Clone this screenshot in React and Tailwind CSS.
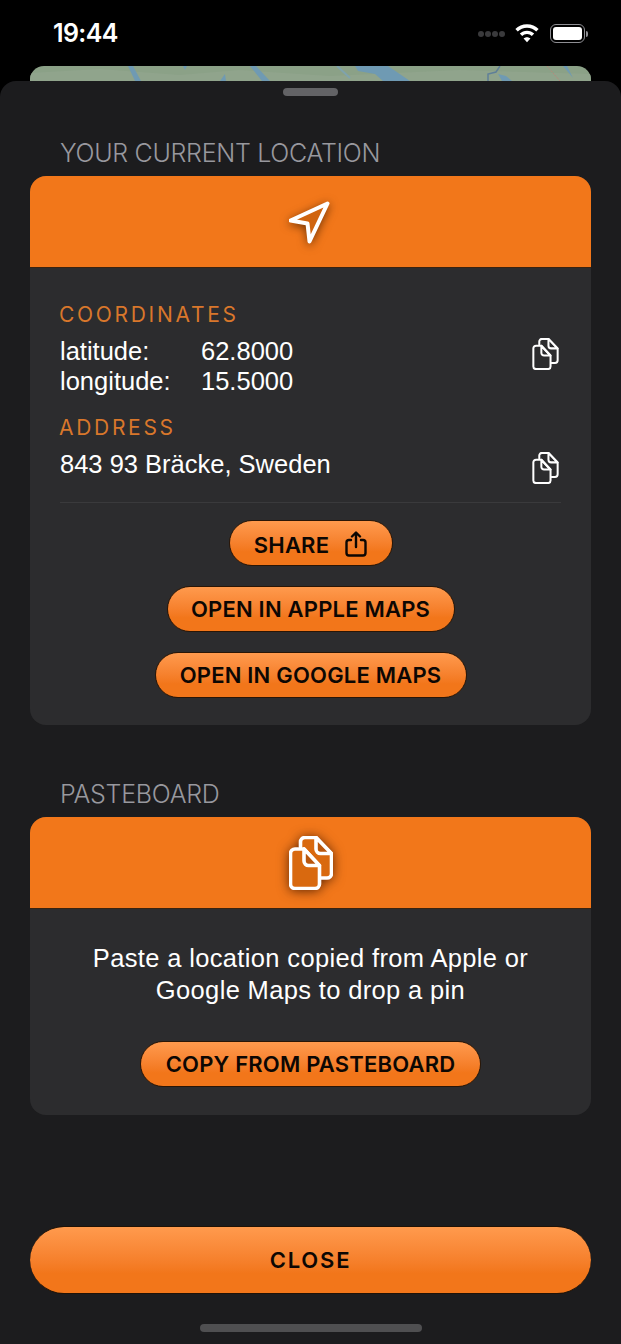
import React from 'react';

const font = { fontFamily: 'Inter, "Noto Sans", sans-serif' };
const bodyFont = 'font-["Liberation_Sans",Arial,sans-serif] text-[25.5px] text-white';

const CopyIcon = ({ className, strokeWidth = 3.4, fill = 'none', foldFill = 'none' }) => (
  <svg className={className} viewBox="0 0 44 54" fill="none" stroke="currentColor" strokeWidth={strokeWidth} strokeLinejoin="round" strokeLinecap="round">
    {/* back page */}
    <path fill={fill} d="M11.500 11V6A4.500 4.500 0 0 1 16 1.500H27L42.500 18V37.500A4.500 4.500 0 0 1 38 42H32" />
    <path fill={foldFill} d="M27 1.500V13A4.500 4.500 0 0 0 31.500 17.500H42.500Z" />
    {/* front page */}
    <path fill={fill} d="M6 13H15L30.500 30V48A4.500 4.500 0 0 1 26 52.500H6A4.500 4.500 0 0 1 1.500 48V17.500A4.500 4.500 0 0 1 6 13Z" />
    <path fill={foldFill} d="M15 13V25A4.500 4.500 0 0 0 19.500 29.500H30.500Z" />
  </svg>
);

const PillButton = ({ children, className = '' }) => (
  <button className={`flex h-[46px] items-center justify-center rounded-full border border-[#2a1606] bg-gradient-to-b from-[#ff9a4d] to-[#f2761a] to-70% text-[22px] font-semibold tracking-[0.2px] text-[#0d0703] ${className}`}>
    {children}
  </button>
);

const Section = ({ title, icon, children }) => (
  <section>
    <h2 className="pl-[30px] text-[25px] font-light leading-[30px] tracking-[-0.3px] text-[#98989e]">{title}</h2>
    <div className="mt-[8px] overflow-hidden rounded-[16px] bg-[#2c2c2e]">
      <div className="flex h-[92px] items-center justify-center border-b border-[#3a2310] bg-[#f2771a] text-white">
        {icon}
      </div>
      {children}
    </div>
  </section>
);

export default function App() {
  return (
    <div className="flex h-[1344px] w-[621px] flex-col overflow-hidden bg-black" style={font}>
      {/* status bar */}
      <div className="flex h-[66px] items-start justify-between pl-[53px] pr-[33px] pt-[18px]">
        <span className="text-[25px] font-semibold leading-[30px] tracking-[-0.6px] text-white">19:44</span>
        <div className="flex items-center pt-[6px]">
          <div className="flex gap-[1px]">
            <span className="h-[6px] w-[6px] rounded-full bg-[#3a3a3c]" />
            <span className="h-[6px] w-[6px] rounded-full bg-[#3a3a3c]" />
            <span className="h-[6px] w-[6px] rounded-full bg-[#3a3a3c]" />
            <span className="h-[6px] w-[6px] rounded-full bg-[#3a3a3c]" />
          </div>
          <svg className="ml-[10px] h-[19px] w-[24px] text-white" viewBox="0 0 26 20" fill="currentColor">
            <path d="M13 0C8 0 3.600 2 0.400 5.200L3 7.800C5.600 5.300 9.100 3.700 13 3.700s7.400 1.600 10 4.100l2.600-2.600C22.400 2 18 0 13 0Z" />
            <path d="M13 7C10 7 7.200 8.200 5.200 10.100l2.600 2.600C9.200 11.400 11 10.600 13 10.600s3.800 0.800 5.200 2.100l2.600-2.600C18.800 8.200 16 7 13 7Z" />
            <path d="M13 14c-1.500 0-2.800 0.600-3.700 1.500L13 19.500l3.700-4C15.800 14.600 14.500 14 13 14Z" />
          </svg>
          <div className="ml-[11px] flex items-center gap-[1px]">
            <div className="h-[19px] w-[35px] rounded-[6px] border border-[#8e8e93] p-[2px]">
              <div className="h-full w-full rounded-[3px] bg-white" />
            </div>
            <div className="h-[6px] w-[2px] rounded-r-full bg-[#8e8e93]" />
          </div>
        </div>
      </div>

      {/* map peeking behind the sheet */}
      <div className="mx-[30px] h-[15px] shrink-0 overflow-hidden rounded-t-[14px] bg-[#8ba187]">
        <svg className="h-full w-full" viewBox="0 0 561 15" preserveAspectRatio="none">
          <path d="M0 7 L70 3 L150 9 L210 4 L300 10 L430 4 L561 8 V15 H0 Z" fill="#90a48c" />
          <path d="M98 0 H103 L111 15 H105 Z" fill="#6f9ab3" />
          <path d="M153 0 H157 L155 4 Z" fill="#6f9ab3" />
          <path d="M190 15 L195 8 L196 15 Z" fill="#6f9ab3" />
          <path d="M220 0 H226 L240 15 H232 Z" fill="#6f9ab3" />
          <path d="M307 0 L320 12" stroke="#7fa3ad" strokeWidth="2" fill="none" />
          <path d="M325 0 H358 L380 15 H353 L345 8 L328 5 Z" fill="#6f9ab3" />
          <path d="M458 15 V8 L466 6 L470 0" stroke="#5f7f98" strokeWidth="1.500" fill="none" />
          <path d="M468 8 L476 10 L482 15 H472 Z" fill="#6f9ab3" />
          <path d="M517 0 L530 15" stroke="#b5897c" strokeWidth="1" strokeDasharray="2 1" fill="none" />
          <path d="M533 0 H537 L543 12 Z" fill="#6f9ab3" />
        </svg>
      </div>

      {/* sheet */}
      <div className="relative flex flex-1 flex-col rounded-t-[16px] bg-[#1c1c1e] px-[30px] pt-[7px]">
        <div className="mx-auto h-[8px] w-[55px] rounded-full bg-[#636366]" />

        <div className="mt-[42px]">
          <Section
            title="YOUR CURRENT LOCATION"
            icon={
              <svg className="h-[44px] w-[44px] drop-shadow-[0_2px_5px_rgba(90,40,0,0.85)]" viewBox="0 0 44 44" fill="#d0640f" stroke="currentColor" strokeWidth="4" strokeLinejoin="round">
                <path d="M38.500 3.500 L1.500 20.500 L18.500 23.500 L20.500 41.500 Z" />
              </svg>
            }
          >
            <div className="px-[30px] pt-[34px]">
              <div className="flex justify-between">
                <div>
                  <p className="-ml-px text-[21px] leading-[26px] tracking-[2.7px] text-[#d9772b]">COORDINATES</p>
                  <div className={`mt-[8px] grid grid-cols-[141px_91px] leading-[30px] ${bodyFont}`}>
                    <span>latitude:</span>
                    <span className="text-right">62.8000</span>
                    <span>longitude:</span>
                    <span className="text-right">15.5000</span>
                  </div>
                </div>
                <CopyIcon className="mr-[2px] mt-[36px] h-[32px] w-[27px] text-white" />
              </div>
              <div className="mt-[19px] flex justify-between">
                <div>
                  <p className="-ml-px text-[21px] leading-[26px] tracking-[2.7px] text-[#d9772b]">ADDRESS</p>
                  <p className={`mt-[8px] leading-[30px] ${bodyFont}`}>843 93 Bräcke, Sweden</p>
                </div>
                <CopyIcon className="-mb-[5px] mr-[2px] mt-[37px] h-[32px] w-[27px] text-white" />
              </div>
              <div className="mt-[23px] border-t border-[#3a3a3c]" />
            </div>
            <div className="flex flex-col items-center gap-[20px] pb-[27px] pt-[17px]">
              <PillButton className="w-[164px] gap-[16px] pt-[4px]">
                SHARE
                <svg className="-mt-[3px] h-[26px] w-[22px]" viewBox="0 0 22 26" fill="none" stroke="currentColor" strokeWidth="2.400" strokeLinecap="round" strokeLinejoin="round">
                  <path d="M6 9H4a2.500 2.500 0 0 0-2.500 2.500v10.500A2.500 2.500 0 0 0 4 24.500h14a2.500 2.500 0 0 0 2.500-2.500V11.500A2.500 2.500 0 0 0 18 9h-2" />
                  <path d="M11 16V2M7 5.500 11 1.500l4 4" />
                </svg>
              </PillButton>
              <PillButton className="w-[288px]">OPEN IN APPLE MAPS</PillButton>
              <PillButton className="w-[312px]">OPEN IN GOOGLE MAPS</PillButton>
            </div>
          </Section>
        </div>

        <div className="mt-[54px]">
          <Section
            title="PASTEBOARD"
            icon={<CopyIcon className="h-[54px] w-[44px] drop-shadow-[0_1px_6px_rgba(80,30,0,0.9)]" strokeWidth="3.600" fill="#d9690f" foldFill="#b9560d" />}
          >
            <div className="flex flex-col items-center pb-[28px] pt-[33px]">
              <p className={`text-center leading-[32px] tracking-[0.35px] ${bodyFont}`}>
                Paste a location copied from Apple or
                <br />
                Google Maps to drop a pin
              </p>
              <PillButton className="mt-[35px] w-[341px]">COPY FROM PASTEBOARD</PillButton>
            </div>
          </Section>
        </div>

        <button className="mt-[111px] h-[68px] w-full shrink-0 rounded-[34px] border-y border-[#1f1206] bg-gradient-to-b from-[#ff9a4d] to-[#f2761a] to-70% text-[22px] font-semibold tracking-[1.800px] text-[#0d0703]">
          CLOSE
        </button>

        <div className="mx-auto mt-[30px] h-[8px] w-[222px] shrink-0 rounded-full bg-[#4f4f51]" />
      </div>
    </div>
  );
}
